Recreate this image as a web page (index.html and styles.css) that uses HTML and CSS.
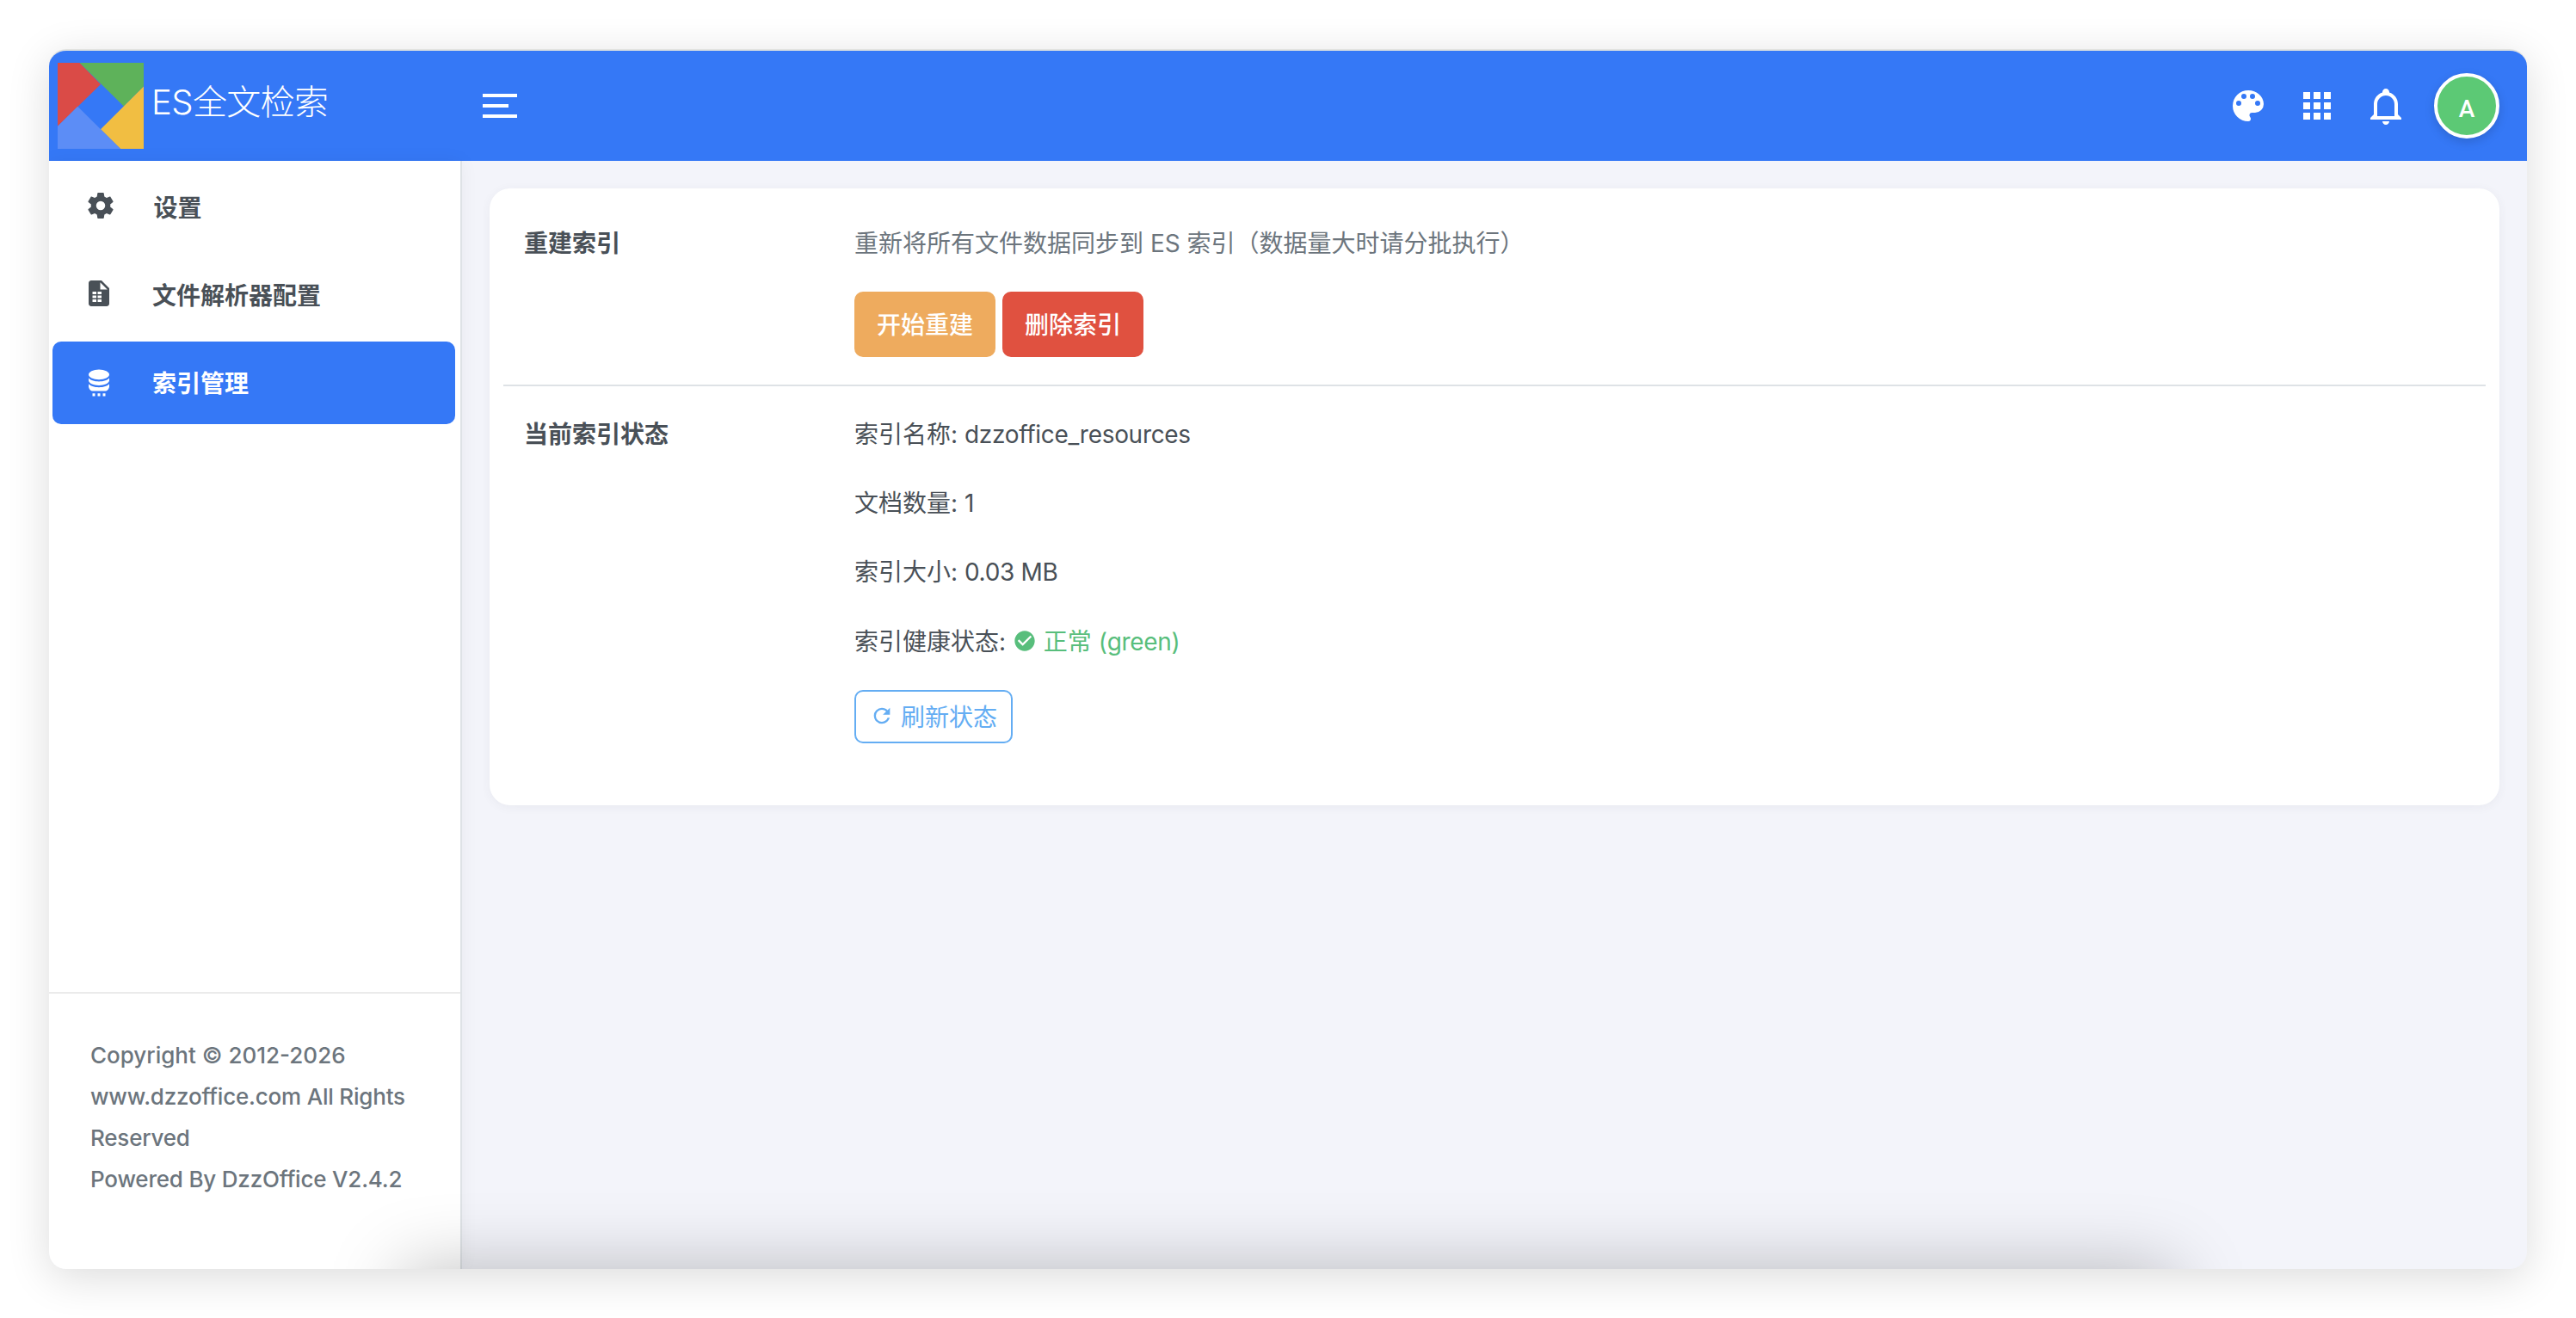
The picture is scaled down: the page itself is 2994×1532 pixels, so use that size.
FILE: index.html
```html
<!DOCTYPE html>
<html lang="zh-CN">
  <head>
    <meta charset="UTF-8" />
    <meta name="viewport" content="width=device-width, initial-scale=1" />
    <title>ES全文检索</title>
    <link rel="stylesheet" href="styles.css">
  </head>
  <body>
    <div class="window">
      <header class="header">
        <div class="brand">
          <svg class="brand-logo" viewBox="0 0 100 100">
            <polygon fill="#da4b47" points="0,0 25.6,0 50,25 0,73.7" />
            <polygon fill="#5eb25a" points="25.6,0 100,0 100,27.5 76.8,50.5" />
            <polygon fill="#f1be42" points="100,27.5 100,100 73,100 50,77.3" />
            <polygon fill="#5c8df6" points="0,73.7 23.3,50.8 73,100 0,100" />
          </svg>
          <span class="brand-name">ES全文检索</span>
        </div>
        <button class="menu-toggle" aria-label="menu">
          <span></span>
          <span class="short"></span>
          <span></span>
        </button>
        <nav class="tools">
          <svg class="icon" viewBox="0 0 24 24"><path d="M17.5,12A1.5,1.5 0 0,1 16,10.5A1.5,1.5 0 0,1 17.5,9A1.5,1.5 0 0,1 19,10.5A1.5,1.5 0 0,1 17.5,12M14.5,8A1.5,1.5 0 0,1 13,6.5A1.5,1.5 0 0,1 14.5,5A1.5,1.5 0 0,1 16,6.5A1.5,1.5 0 0,1 14.5,8M9.5,8A1.5,1.5 0 0,1 8,6.5A1.5,1.5 0 0,1 9.5,5A1.5,1.5 0 0,1 11,6.5A1.5,1.5 0 0,1 9.5,8M6.5,12A1.5,1.5 0 0,1 5,10.5A1.5,1.5 0 0,1 6.5,9A1.5,1.5 0 0,1 8,10.5A1.5,1.5 0 0,1 6.5,12M12,3A9,9 0 0,0 3,12A9,9 0 0,0 12,21A1.5,1.5 0 0,0 13.5,19.5C13.5,19.11 13.35,18.76 13.11,18.5C12.88,18.23 12.73,17.88 12.73,17.5A1.5,1.5 0 0,1 14.23,16H16A5,5 0 0,0 21,11C21,6.58 16.97,3 12,3Z" /></svg>
          <svg class="icon" viewBox="0 0 24 24"><path d="M16,20H20V16H16M16,14H20V10H16M10,8H14V4H10M16,8H20V4H16M10,14H14V10H10M4,14H8V10H4M4,20H8V16H4M10,20H14V16H10M4,8H8V4H4V8Z" /></svg>
          <svg class="icon" viewBox="0 0 24 24"><path d="M10 21H14C14 22.1 13.1 23 12 23S10 22.1 10 21M21 19V20H3V19L5 17V11C5 7.9 7.03 5.17 10 4.29C10 4.19 10 4.1 10 4C10 2.9 10.9 2 12 2S14 2.9 14 4C14 4.1 14 4.19 14 4.29C16.97 5.17 19 7.9 19 11V17L21 19M17 11C17 8.24 14.76 6 12 6S7 8.24 7 11V18H17V11Z" /></svg>
          <span class="avatar">A</span>
        </nav>
      </header>

      <div class="body">
        <aside class="sidebar">
          <ul class="menu">
            <li class="menu-item first">
              <svg class="menu-icon" viewBox="0 0 24 24"><path d="M12,15.5A3.5,3.5 0 0,1 8.5,12A3.5,3.5 0 0,1 12,8.5A3.5,3.5 0 0,1 15.5,12A3.5,3.5 0 0,1 12,15.5M19.43,12.97C19.47,12.65 19.5,12.33 19.5,12C19.5,11.67 19.47,11.34 19.43,11L21.54,9.37C21.73,9.22 21.78,8.95 21.66,8.73L19.66,5.27C19.54,5.05 19.27,4.96 19.05,5.05L16.56,6.05C16.04,5.66 15.5,5.32 14.87,5.07L14.5,2.42C14.46,2.18 14.25,2 14,2H10C9.75,2 9.54,2.18 9.5,2.42L9.13,5.07C8.5,5.32 7.96,5.66 7.44,6.05L4.95,5.05C4.73,4.96 4.46,5.05 4.34,5.27L2.34,8.73C2.21,8.95 2.27,9.22 2.46,9.37L4.57,11C4.53,11.34 4.5,11.67 4.5,12C4.5,12.33 4.53,12.65 4.57,12.97L2.46,14.63C2.27,14.78 2.21,15.05 2.34,15.27L4.34,18.73C4.46,18.95 4.73,19.03 4.95,18.95L7.44,17.94C7.96,18.34 8.5,18.68 9.13,18.93L9.5,21.58C9.54,21.82 9.75,22 10,22H14C14.25,22 14.46,21.82 14.5,21.58L14.87,18.93C15.5,18.67 16.04,18.34 16.56,17.94L19.05,18.95C19.27,19.03 19.54,18.95 19.66,18.73L21.66,15.27C21.78,15.05 21.73,14.78 21.54,14.63L19.43,12.97Z" /></svg>
              <span>设置</span>
            </li>
            <li class="menu-item">
              <svg class="menu-icon" viewBox="0 0 24 24"><path fill-rule="evenodd" d="M6 2H14L20 8V20C20 21.1 19.1 22 18 22H6C4.9 22 4 21.1 4 20V4C4 2.9 4.9 2 6 2M13 3.5V9H18.5ZM7 10.7V12.700H10V10.700ZM11 10.700V12.700H14V10.700ZM7 13.700V15.700H10V13.700ZM11 13.700V15.700H14V13.700ZM7 16.700V18.700H10V16.700ZM11 16.700V18.700H14V16.700Z" /></svg>
              <span>文件解析器配置</span>
            </li>
            <li class="menu-item active">
              <svg class="menu-icon" viewBox="0 0 24 24">
                <ellipse cx="12" cy="6.9" rx="8" ry="3.9" />
                <path d="M4 9.500C5 11.200 8.500 12.300 12 12.300S19 11.200 20 9.500V11.700C19.500 14 16 15.300 12 15.300S4.500 14 4 11.700Z" />
                <path d="M4 14.200C5 15.800 8.500 16.800 12 16.800S19 15.800 20 14.200V16.500C19.700 18 18.800 19.200 17.500 19.700H6.500C5.200 19.200 4.300 18 4 16.500Z" />
                <path d="M7 21.500H9V23.600H7ZM11 21.500H13V23.600H11ZM15 21.500H17V23.600H15Z" />
              </svg>
              <span>索引管理</span>
            </li>
          </ul>
          <footer class="copyright">
            Copyright © 2012-2026<br />
            <span class="tight">www.dzzoffice.com All Rights<br />
            Reserved<br />
            Powered By DzzOffice V2.4.2</span>
          </footer>
        </aside>

        <main class="content">
          <section class="card">
            <dl class="row">
              <dt>重建索引</dt>
              <dd>
                <p class="hint">重新将所有文件数据同步到 ES 索引（数据量大时请分批执行）</p>
                <div class="actions">
                  <button class="btn btn-warning">开始重建</button>
                  <button class="btn btn-danger">删除索引</button>
                </div>
              </dd>
            </dl>
            <hr />
            <dl class="row">
              <dt>当前索引状态</dt>
              <dd>
                <p class="stat">索引名称: <span class="value">dzzoffice_resources</span></p>
                <p class="stat">文档数量: <span class="value">1</span></p>
                <p class="stat">索引大小: <span class="value">0.03 MB</span></p>
                <p class="stat">
                  索引健康状态:
                  <span class="ok"><svg class="icon-sm" viewBox="0 0 24 24"><path d="M12 2C6.5 2 2 6.5 2 12S6.5 22 12 22 22 17.5 22 12 17.5 2 12 2M10 17L5 12L6.41 10.59L10 14.17L17.59 6.58L19 8L10 17Z" /></svg> 正常 <span class="value">(green)</span></span>
                </p>
                <button class="btn-outline">
                  <svg class="icon-sm" viewBox="0 0 24 24"><path d="M17.65,6.35C16.2,4.9 14.21,4 12,4A8,8 0 0,0 4,12A8,8 0 0,0 12,20C15.73,20 18.84,17.45 19.73,14H17.65C16.83,16.33 14.61,18 12,18A6,6 0 0,1 6,12A6,6 0 0,1 12,6C13.66,6 15.14,6.69 16.22,7.78L13,11H20V4L17.65,6.35Z" /></svg>
                  <span>刷新状态</span>
                </button>
              </dd>
            </dl>
          </section>
        </main>
      </div>
    </div>
  </body>
</html>
```
FILE: styles.css
```css
/* Reset and base */
* {
  margin: 0;
  padding: 0;
  box-sizing: border-box;
}

body {
  font-family: Inter, "Noto Sans CJK SC", sans-serif;
  font-size: 28px;
  color: #495057;
  background: #fff;
  height: 1532px;
  padding: 57px;
  overflow: hidden;
}

button {
  font: inherit;
}

svg {
  fill: currentColor;
}

.window {
  position: relative;
  display: flex;
  flex-direction: column;
  width: 2880px;
  height: 1418px;
  border-top: 2px solid #e2e3e0;
  border-radius: 20px;
  background: #f3f4fa;
  box-shadow: 0 10px 50px rgba(0, 0, 0, 0.14);
  overflow: hidden;
}

/* shade rising from the bottom edge */
.window::after {
  content: "";
  position: absolute;
  left: 410px;
  right: 410px;
  bottom: -100px;
  height: 100px;
  box-shadow: 0 0 84px rgba(0, 0, 0, 0.25);
}

/* Header */
.header {
  display: flex;
  align-items: center;
  height: 128px;
  flex: none;
  background: #3578f6;
  color: #fff;
  padding-right: 32px;
}

.brand {
  display: flex;
  align-items: center;
  width: 480px;
  padding-left: 10px;
}

.brand-logo {
  width: 100px;
  height: 100px;
}

.brand-name {
  font-size: 40px;
  font-weight: 300;
  letter-spacing: -0.6px;
  line-height: 60px;
  margin: -8px 0 0 9px;
}

.menu-toggle {
  display: flex;
  flex-direction: column;
  gap: 8px;
  margin-left: 24px;
  border: none;
  background: none;
}

.menu-toggle span {
  width: 40px;
  height: 4px;
  background: #fff;
}

.menu-toggle .short {
  width: 30px;
}

.tools {
  display: flex;
  align-items: center;
  gap: 32px;
  margin-left: auto;
}

.icon {
  width: 48px;
  height: 48px;
}

.avatar {
  width: 76px;
  height: 76px;
  border: 4px solid #fff;
  border-radius: 50%;
  background: #5cc975;
  font-family: Roboto, sans-serif;
  font-weight: 500;
  line-height: 76px;
  text-align: center;
  box-shadow: 0 4px 12px rgba(0, 0, 0, 0.15);
}

.body {
  display: flex;
  flex: 1;
}

/* Sidebar */
.sidebar {
  display: flex;
  flex-direction: column;
  width: 480px;
  background: #fff;
  border-right: 2px solid #dee2e6;
  box-shadow: 0 0 20px rgba(0, 0, 0, 0.05);
}

.menu {
  display: flex;
  flex-direction: column;
  gap: 6px;
  padding: 6px 6px 0 4px;
  list-style: none;
}

.menu-item {
  display: flex;
  align-items: center;
  gap: 44px;
  height: 96px;
  padding: 0 0 2px 36px;
  border-radius: 10px;
  font-weight: 600;
}

.menu-item.first {
  padding-left: 37.5px;
}

.menu-item.active {
  background: #3578f6;
  color: #fff;
}

.menu-icon {
  width: 36px;
  height: 36px;
  margin-top: -2px;
}

.copyright {
  height: 322px;
  margin-top: auto;
  padding: 48px;
  border-top: 2px solid #ebebeb;
  color: #6c757d;
  font-size: 26px;
  font-weight: 500;
  line-height: 48px;
  white-space: nowrap;
}

.tight {
  letter-spacing: -0.2px;
}

/* Content */
.content {
  flex: 1;
  padding: 32px;
}

.card {
  height: 717px;
  padding: 40px 16px;
  border-radius: 24px;
  background: #fff;
  box-shadow: 0 2px 12px rgba(60, 60, 90, 0.06);
}

.row {
  display: flex;
  padding-left: 24px;
}

.row dt {
  width: 384px;
  font-weight: 600;
  line-height: 48px;
}

.hint {
  color: #6c757d;
  line-height: 48px;
}

.actions {
  display: flex;
  gap: 8px;
  margin-top: 32px;
}

.btn {
  width: 164px;
  height: 76px;
  padding-bottom: 2px;
  border: none;
  border-radius: 10px;
  color: #fff;
  font-weight: 500;
}

.btn-warning {
  background: #eeab5e;
}

.btn-danger {
  background: #e05140;
}

hr {
  height: 2px;
  margin: 32px 0;
  border: none;
  background: #dee2e6;
}

.stat {
  height: 48px;
  margin-bottom: 32.2px;
  line-height: 48px;
}

.value {
  letter-spacing: -0.3px;
}

.ok {
  color: #58be7c;
}

.icon-sm {
  width: 28px;
  height: 28px;
  vertical-align: -3px;
}

.btn-outline {
  display: flex;
  align-items: center;
  gap: 8px;
  height: 62px;
  padding: 0 16px 2px;
  border: 2px solid #64adf3;
  border-radius: 10px;
  background: none;
  color: #64adf3;
}
```
